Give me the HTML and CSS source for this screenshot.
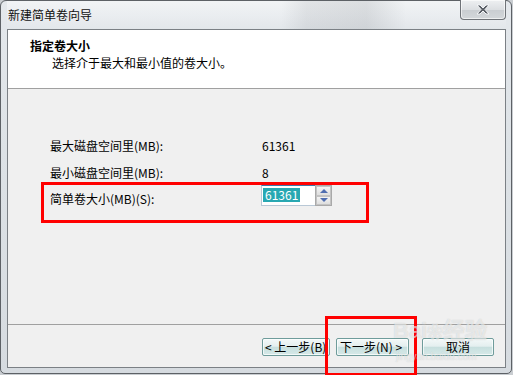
FILE: index.html
```html
<!DOCTYPE html>
<html lang="zh-CN">
<head>
  <meta charset="UTF-8" />
  <title>新建简单卷向导</title>
  <link rel="stylesheet" href="styles.css">
</head>
<body>
  <div class="window">
    <div class="titlebar">
      <span class="title">新建简单卷向导</span>
      <button class="close" title="关闭">
        <svg width="16" height="11" viewBox="0 0 16 11">
          <path d="M2 1 H5 L8 4 L11 1 H14 L10 5.5 L14 10 H11 L8 7 L5 10 H2 L6 5.5 Z" fill="#5a5f66" stroke="#f4f6f8" stroke-width="1" stroke-linejoin="round"/>
        </svg>
      </button>
    </div>

    <div class="client">
      <div class="header">
        <div class="header-title">指定卷大小</div>
        <div class="header-sub">选择介于最大和最小值的卷大小。</div>
      </div>

      <div class="content">
        <div class="form">
          <span class="label">最大磁盘空间里(MB):</span>
          <span class="value">61361</span>
          <span class="label">最小磁盘空间里(MB):</span>
          <span class="value">8</span>
          <span class="label">简单卷大小(MB)(S):</span>
          <div class="spin">
            <div class="spin-input"><span class="selected">61361</span></div>
            <div class="spin-buttons">
              <span class="spin-btn"><i class="arrow up"></i></span>
              <span class="spin-btn"><i class="arrow down"></i></span>
            </div>
          </div>
        </div>
      </div>

      <div class="footer">
        <button class="btn btn-back">&lt; 上一步(B)</button>
        <button class="btn btn-next">下一步(N) &gt;</button>
        <button class="btn btn-cancel">取消</button>
      </div>
    </div>

    <!-- 标注框 -->
    <div class="mark mark-size"></div>
    <div class="mark mark-next"></div>
    <div class="watermark">
      <span class="wm-big">Bai<span class="paw">❀</span>经验</span>
      <span class="wm-small">jingyan.baidu.com</span>
    </div>
  </div>
</body>
</html>
```

FILE: styles.css
```css
* {
  box-sizing: border-box;
}

body {
  margin: 0;
  width: 513px;
  height: 375px;
  background: #c9cdd1;
  font-family: 'Noto Sans CJK SC', sans-serif;
  font-size: 12px;
  color: #000;
  overflow: hidden;
}

.window {
  position: relative;
  width: 512px;
  height: 374px;
  display: flex;
  flex-direction: column;
  padding: 0 5px 5px 6px;
  border: 1px solid #5d6166;
  border-radius: 6px 6px 5px 5px;
  background: linear-gradient(180deg, #e4e8ec 0%, #dde2e6 40%, #d6dbe0 100%);
}

.titlebar {
  height: 28px;
  display: flex;
  align-items: flex-start;
  justify-content: space-between;
  background:
    linear-gradient(90deg, transparent 0%, transparent 55%, rgba(90, 95, 100, 0.10) 60%, rgba(90, 95, 100, 0.14) 72%, transparent 80%),
    linear-gradient(180deg, rgba(255, 255, 255, 0.5), rgba(255, 255, 255, 0));
}

.title {
  margin: 6px 0 0 1px;
  line-height: 16px;
  font-size: 12px;
  color: #111;
}

.close {
  width: 46px;
  height: 20px;
  margin-top: -1px;
  padding: 0;
  display: flex;
  align-items: center;
  justify-content: center;
  border: 1px solid #6f7378;
  border-top: none;
  border-radius: 0 0 4px 4px;
  background: linear-gradient(180deg, #eef0f2 0%, #dcdfe2 50%, #c9cdd1 51%, #d3d7da 100%);
  box-shadow: inset 0 0 0 1px rgba(255, 255, 255, 0.6);
}

.client {
  flex: 1;
  display: flex;
  flex-direction: column;
  border: 1px solid #7b8085;
  background: #f0f0f0;
}

.header {
  height: 59px;
  padding: 7px 0 0 22px;
  background: #fff;
  border-bottom: 1px solid #a0a0a0;
  line-height: 17px;
}

.header-title {
  font-weight: bold;
}

.header-sub {
  margin-left: 22px;
}

.content {
  flex: 1;
  padding: 50px 0 0 42px;
  border-bottom: 1px solid #a0a0a0;
}

.form {
  display: grid;
  grid-template-columns: 212px auto;
  grid-template-rows: 27px 26px 24px;
  line-height: 14px;
  align-items: start;
}

.spin {
  display: flex;
  margin: -7px 0 0 -1px;
}

.spin-input {
  width: 54px;
  height: 21px;
  padding: 2px 0 0 1px;
  background: #fff;
  border: 1px solid #b9c8d6;
  border-top-color: #3f78a8;
  border-right: none;
}

.selected {
  display: inline-block;
  padding: 0 2px;
  line-height: 14px;
  background: #28a8b2;
  color: #fff;
}

.spin-buttons {
  width: 17px;
  height: 21px;
  display: flex;
  flex-direction: column;
  border: 1px solid #a9a9a9;
  background: #fff;
}

.spin-btn {
  flex: 1;
  display: flex;
  align-items: center;
  justify-content: center;
  border: 1px solid #c3c3c3;
  background: linear-gradient(180deg, #f4f4f4, #dedede);
}

.arrow {
  width: 0;
  height: 0;
  border-left: 4px solid transparent;
  border-right: 4px solid transparent;
}

.arrow.up {
  border-bottom: 4px solid #4f6db0;
}

.arrow.down {
  border-top: 4px solid #4f6db0;
}

.footer {
  height: 42px;
  display: flex;
  align-items: flex-start;
  padding: 13px 0 0 254px;
}

.btn {
  height: 18px;
  padding: 0 0 0 3px;
  font-family: 'Noto Sans CJK SC', sans-serif;
  font-size: 12px;
  line-height: 14px;
  text-align: left;
  white-space: nowrap;
  overflow: hidden;
  color: #000;
  border: 1px solid #6f9c9b;
  border-radius: 2px;
  background: linear-gradient(180deg, #f3f8f8 0%, #e4efef 45%, #c7dfde 52%, #d6e9e8 100%);
  box-shadow: inset 0 0 0 1px rgba(255, 255, 255, 0.7);
}

.btn-back {
  width: 68px;
  padding-left: 2px;
}

.btn-next {
  width: 73px;
  margin-left: 6px;
}

.btn-cancel {
  width: 72px;
  margin-left: 13px;
  text-align: center;
  padding: 0;
}

.mark {
  position: absolute;
  border: 3px solid #f00;
}

.mark-size {
  left: 40px;
  top: 181px;
  width: 328px;
  height: 41px;
}

.mark-next {
  left: 324px;
  top: 315px;
  width: 92px;
  height: 60px;
}

.watermark {
  position: absolute;
  left: 392px;
  top: 318px;
  display: flex;
  flex-direction: column;
  color: rgba(255, 255, 255, 0.55);
  text-shadow: 0 0 1px rgba(120, 130, 130, 0.35);
  pointer-events: none;
}

.wm-big {
  font-family: 'Liberation Sans', sans-serif;
  font-size: 22px;
  font-weight: bold;
  line-height: 24px;
}

.paw {
  font-size: 16px;
}

.wm-small {
  font-family: 'Liberation Sans', sans-serif;
  font-size: 10px;
  line-height: 12px;
  margin: 6px 0 0 3px;
}
```
